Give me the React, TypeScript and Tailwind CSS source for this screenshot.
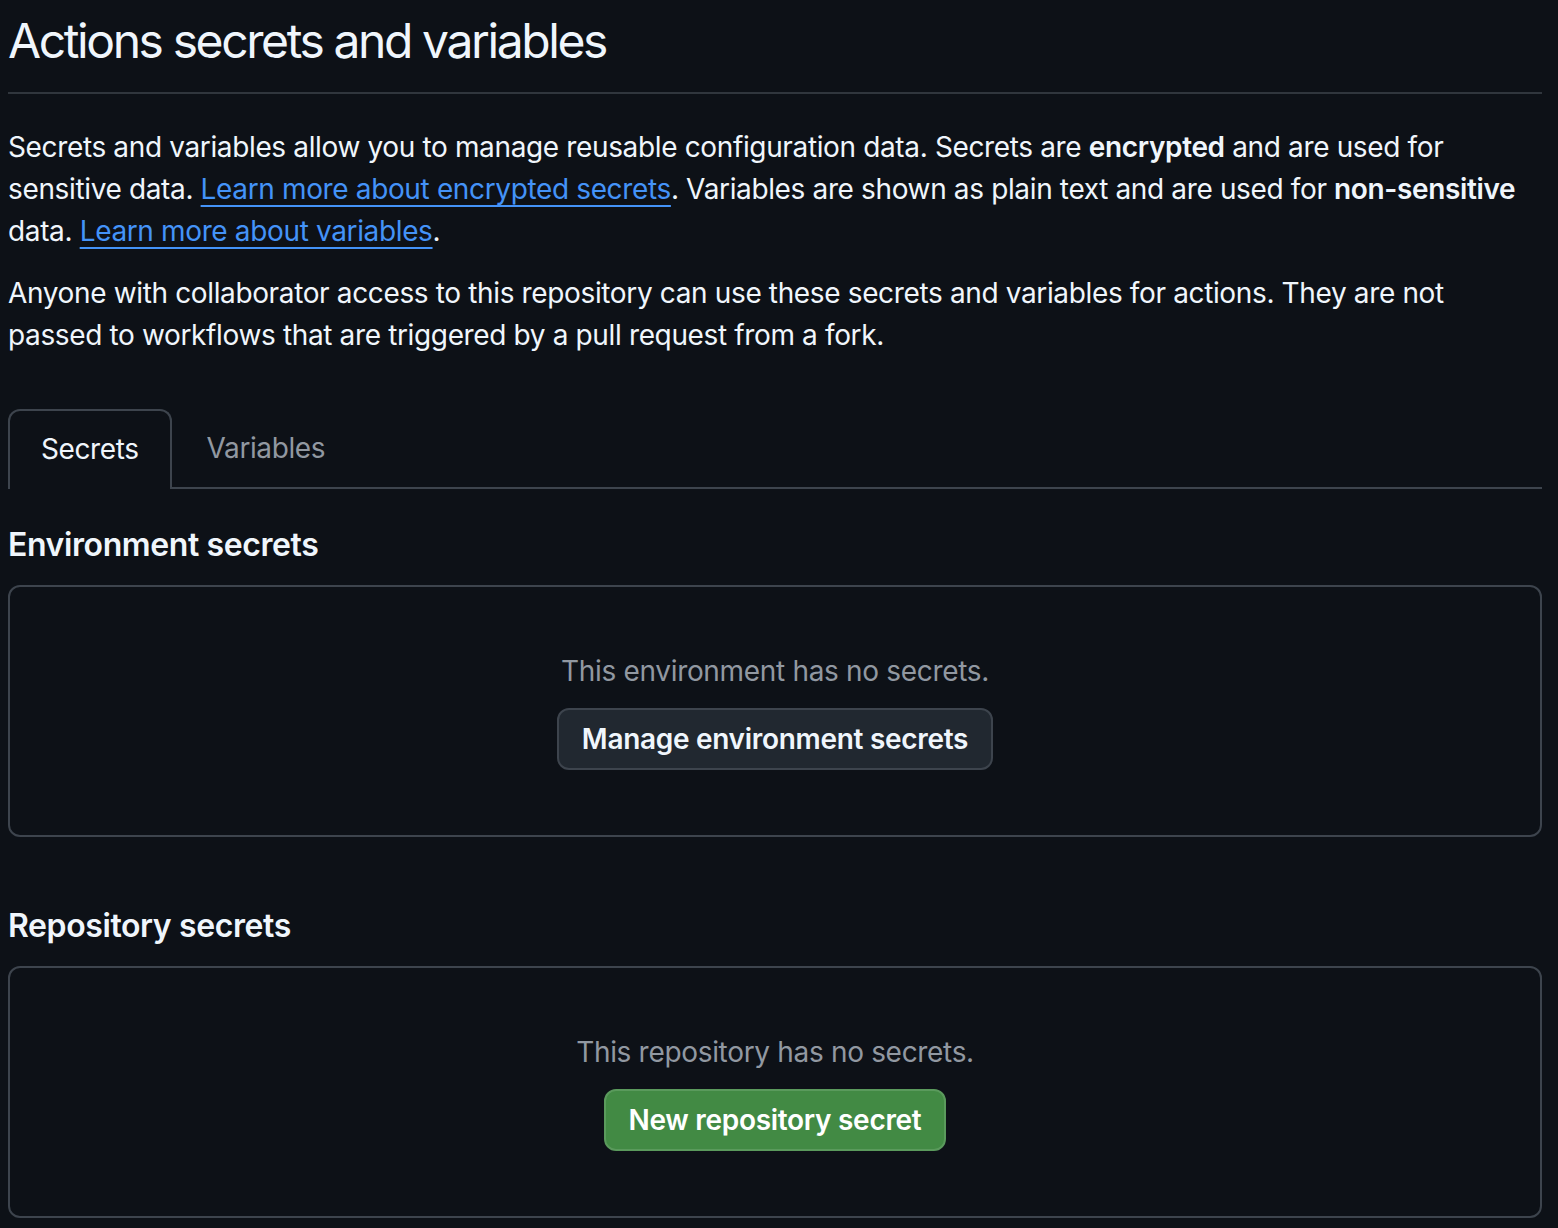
import React from "react";

const font = { fontFamily: "Inter, 'Noto Sans', sans-serif" };

function Blankslate({ message, children }: { message: string; children: React.ReactNode }) {
  return (
    <div className="flex flex-col items-center rounded-[12px] border-2 border-[#3d444d] px-8 pt-[63px] pb-[65px]">
      <p className="text-[28px] leading-[42px] tracking-[-0.32px] text-[#9198a1]">{message}</p>
      <div className="mt-[16px]">{children}</div>
    </div>
  );
}

export default function App() {
  return (
    <div className="min-h-[1228px] bg-[#0d1117] text-[#f0f6fc]" style={font}>
      <div className="ml-2 w-[1534px]">
        <div className="border-b-2 border-[#30363d] pt-[5px] pb-[15px]">
          <h1 className="text-[48px] font-normal leading-[72px] tracking-[-2.4px]">Actions secrets and variables</h1>
        </div>

        <div className="mt-[32px] text-[28px] leading-[42px] tracking-[-0.36px]">
          <p>
            Secrets and variables allow you to manage reusable configuration data. Secrets are{" "}
            <strong className="font-semibold">encrypted</strong> and are used for
            <br />
            sensitive data.{" "}
            <a className="text-[#4493f8] underline decoration-[2px] underline-offset-[6px]" href="#">
              Learn more about encrypted secrets
            </a>
            . Variables are shown as plain text and are used for{" "}
            <strong className="font-semibold">non-sensitive</strong>
            <br />
            data.{" "}
            <a className="text-[#4493f8] underline decoration-[2px] underline-offset-[6px]" href="#">
              Learn more about variables
            </a>
            .
          </p>
          <p className="mt-[20px]">
            Anyone with collaborator access to this repository can use these secrets and variables for actions. They are not
            <br />
            passed to workflows that are triggered by a pull request from a fork.
          </p>
        </div>

        <div className="mt-[53px] flex items-end border-b-2 border-[#3d444d] text-[28px] tracking-[-0.4px]">
          <div className="-mb-[2px] flex h-[80px] items-center rounded-t-[12px] border-2 border-b-0 border-[#3d444d] bg-[#0d1117] px-[31px] pb-[2px] text-[#f0f6fc]">
            Secrets
          </div>
          <div className="flex h-[78px] items-center px-[35px] text-[#9198a1]">Variables</div>
        </div>

        <h2 className="mt-[32px] text-[32px] font-semibold leading-[48px] tracking-[-0.4px]">Environment secrets</h2>
        <div className="mt-[16px]">
          <Blankslate message="This environment has no secrets.">
            <button className="h-[62px] rounded-[12px] border-2 border-[#3d444d] bg-[#212830] px-[23px] text-[28px] font-semibold tracking-[-0.3px] text-[#f0f6fc]">
              Manage environment secrets
            </button>
          </Blankslate>
        </div>

        <h2 className="mt-[65px] text-[32px] font-semibold leading-[48px] tracking-[-0.4px]">Repository secrets</h2>
        <div className="mt-[16px]">
          <Blankslate message="This repository has no secrets.">
            <button className="h-[62px] rounded-[12px] border-2 border-[#5a9a5c] bg-[#428a44] px-[23px] text-[28px] font-semibold tracking-[-0.3px] text-white">
              New repository secret
            </button>
          </Blankslate>
        </div>
      </div>
    </div>
  );
}
